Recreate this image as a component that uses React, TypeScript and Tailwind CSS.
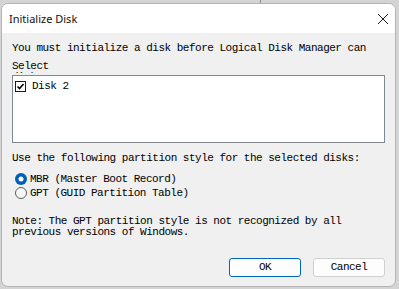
import React from "react";

const mono = { fontFamily: '"Liberation Mono", "DejaVu Sans Mono", monospace' };

export default function App() {
  return (
    <div className="w-[399px] h-[289px] bg-[#d4d4d4] overflow-hidden relative">
      <div className="absolute left-[260px] top-0 w-px h-[3px] bg-[#8a8a8a]" />
      <div
        className="ml-[1px] mt-[3px] w-[395px] h-[284px] rounded-[7px] border border-[#b4b4b4] bg-[#f0f0f0] overflow-hidden flex flex-col"
      >
        <div className="h-[29px] bg-white flex items-center justify-between pl-[7px] pr-[5px] shrink-0">
          <span className="text-[11px] text-[#111] leading-none" style={{ fontFamily: '"Noto Sans", sans-serif' }}>
            Initialize Disk
          </span>
          <svg width="12" height="12" viewBox="0 0 12 12" className="mr-[1px]">
            <path d="M1 1 L11 11 M11 1 L1 11" stroke="#1a1a1a" strokeWidth="1" fill="none" />
          </svg>
        </div>
        <div
          className="flex-1 flex flex-col pl-[10px] pr-[10px] pt-[10px] text-[11px] leading-[11px] tracking-[-0.5px] text-black"
          style={mono}
        >
          <div className="h-[11px] whitespace-nowrap">You must initialize a disk before Logical Disk Manager can</div>
          <div className="mt-[7px] h-[12px] overflow-hidden">
            <div className="h-[11px]">Select</div>
            <div className="h-[11px]">disks:</div>
          </div>
          <div className="mt-[2px] h-[68px] bg-white border border-[#828790] pt-[5px] pl-[2px]">
            <div className="flex items-center h-[11px]">
              <svg width="11" height="11" viewBox="0 0 11 11">
                <rect x="0.5" y="0.5" width="10" height="10" fill="white" stroke="#1a1a1a" />
                <path d="M2.5 5.5 L4.5 7.5 L8.5 3" stroke="#000" strokeWidth="1.6" fill="none" />
              </svg>
              <span className="ml-[6px]">Disk 2</span>
            </div>
          </div>
          <div className="mt-[10px] h-[11px] whitespace-nowrap">Use the following partition style for the selected disks:</div>
          <div className="mt-[8px] flex flex-col">
            <div className="h-[14px] flex items-center pl-[3px]">
              <svg width="12" height="12" viewBox="0 0 12 12">
                <circle cx="6" cy="6" r="6" fill="#005fb8" />
                <circle cx="6" cy="6" r="2.5" fill="white" />
              </svg>
              <span className="ml-[3px]">MBR (Master Boot Record)</span>
            </div>
            <div className="h-[14px] flex items-center pl-[3px]">
              <svg width="12" height="12" viewBox="0 0 12 12">
                <circle cx="6" cy="6" r="5.5" fill="#f8f8f8" stroke="#5c5c5c" />
              </svg>
              <span className="ml-[3px]">GPT (GUID Partition Table)</span>
            </div>
          </div>
          <div className="mt-[16px]">
            <div className="h-[11px] whitespace-nowrap">Note: The GPT partition style is not recognized by all</div>
            <div className="h-[11px] whitespace-nowrap">previous versions of Windows.</div>
          </div>
          <div className="mt-[20px] flex justify-end gap-[12px] pr-[0px]">
            <button
              className="w-[72px] h-[19px] rounded-[3px] border border-[#0067c0] bg-[#fdfdfd] text-[11px] leading-none tracking-[-0.5px] text-black"
              style={mono}
            >
              OK
            </button>
            <button
              className="w-[72px] h-[19px] rounded-[3px] border border-[#d0d0d0] bg-[#fdfdfd] text-[11px] leading-none tracking-[-0.5px] text-black"
              style={mono}
            >
              Cancel
            </button>
          </div>
        </div>
      </div>
    </div>
  );
}
